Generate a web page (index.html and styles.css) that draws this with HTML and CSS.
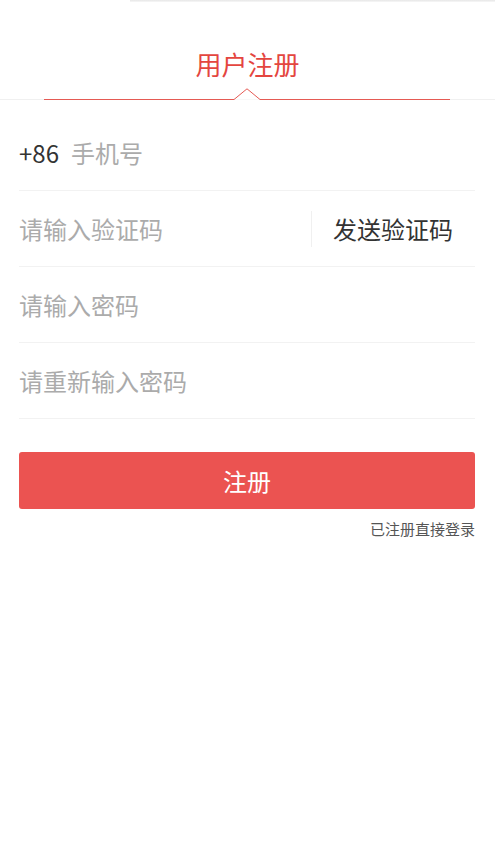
FILE: index.html
```
<!DOCTYPE html>
<html lang="zh-CN">
<head>
<meta charset="utf-8">
<title>用户注册</title>
<link rel="stylesheet" href="styles.css">
</head>
<body>
<div class="page">
  <div class="topstrip"></div>
  <header class="header">
    <h1 class="title">用户注册</h1>
    <svg class="tabline" viewBox="0 0 495 12" preserveAspectRatio="none" aria-hidden="true">
      <line x1="0" y1="11.5" x2="495" y2="11.5" stroke="#f0f0f0" stroke-width="1"/>
      <polyline points="44,11.5 234,11.5 247,0.8 260,11.5 450,11.5" fill="#fff" stroke="#e55a54" stroke-width="1"/>
    </svg>
  </header>
  <form class="form">
    <div class="row">
      <span class="prefix">+86</span>
      <span class="ph">手机号</span>
    </div>
    <div class="row">
      <span class="ph grow">请输入验证码</span>
      <span class="send">发送验证码</span>
    </div>
    <div class="row">
      <span class="ph">请输入密码</span>
    </div>
    <div class="row">
      <span class="ph">请重新输入密码</span>
    </div>
    <div class="submit">注册</div>
    <div class="login">已注册直接登录</div>
  </form>
</div>
</body>
</html>
```
FILE: styles.css
```
* { box-sizing: border-box; }
html, body {
  margin: 0;
  padding: 0;
  background: #fff;
}
body {
  font-family: "Noto Sans CJK SC", "Noto Sans", sans-serif;
  width: 495px;
}
.page {
  display: flex;
  flex-direction: column;
}
.topstrip {
  height: 2px;
  margin-left: 130px;
  background: linear-gradient(#e6e6e6, #f7f7f7);
}
.header {
  display: flex;
  flex-direction: column;
  align-items: center;
}
.title {
  margin: 0;
  height: 86px;
  display: flex;
  align-items: center;
  padding-top: 38px;
  font-size: 26px;
  font-weight: 400;
  color: #e4463f;
  line-height: 1;
}
.tabline {
  display: block;
  width: 495px;
  height: 12px;
}
.form {
  margin: 15px 20px 0 19px;
  display: flex;
  flex-direction: column;
}
.row {
  height: 76px;
  border-bottom: 1px solid #f2f2f2;
  display: flex;
  align-items: center;
  font-size: 24px;
  line-height: 1;
}
.prefix {
  color: #333;
  margin-right: 12px;
}
.ph {
  color: #ababab;
}
.grow { flex: 1; }
.send {
  color: #333;
  border-left: 1px solid #f0f0f0;
  height: 36px;
  display: flex;
  align-items: center;
  padding: 0 22px 0 21px;
}
.submit {
  margin-top: 33px;
  height: 57px;
  border-radius: 3px;
  background: #eb5351;
  color: #fff;
  font-size: 24px;
  display: flex;
  align-items: center;
  justify-content: center;
}
.login {
  align-self: flex-end;
  margin-top: 10px;
  font-size: 15px;
  color: #555;
  line-height: 20px;
}
```
